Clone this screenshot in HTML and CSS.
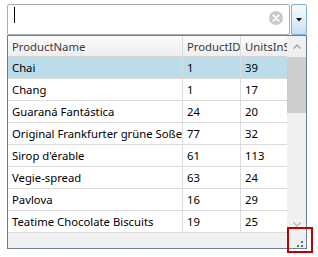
FILE: index.html
```html
<!DOCTYPE html>
<html lang="en">
<head>
    <meta charset="UTF-8">
    <title>Products</title>
    <link rel="stylesheet" href="styles.css">
</head>
<body>
    <div class="combo">
        <div class="field">
            <span class="caret"></span>
            <span class="clear">
                <svg width="14" height="14" viewBox="0 0 14 14">
                    <circle cx="7" cy="7" r="7" fill="#c9c9c9"/>
                    <path d="M4.3 4.3 L9.7 9.7 M9.7 4.3 L4.3 9.7" stroke="#fff" stroke-width="1.8" stroke-linecap="round"/>
                </svg>
            </span>
        </div>
        <div class="drop-btn">
            <svg width="6" height="4" viewBox="0 0 6 4"><path d="M0 0 H6 L3 3.5 Z" fill="#111"/></svg>
        </div>
    </div>

    <div class="popup">
        <div class="grid">
            <div class="table">
                <div class="row head">
                    <div class="cell c-name">ProductName</div>
                    <div class="cell c-id">ProductID</div>
                    <div class="cell c-units">UnitsInStock</div>
                </div>
                <div class="row sel">
                    <div class="cell c-name">Chai</div>
                    <div class="cell c-id">1</div>
                    <div class="cell c-units">39</div>
                </div>
                <div class="row">
                    <div class="cell c-name">Chang</div>
                    <div class="cell c-id">1</div>
                    <div class="cell c-units">17</div>
                </div>
                <div class="row">
                    <div class="cell c-name">Guaraná Fantástica</div>
                    <div class="cell c-id">24</div>
                    <div class="cell c-units">20</div>
                </div>
                <div class="row">
                    <div class="cell c-name">Original Frankfurter grüne Soße</div>
                    <div class="cell c-id">77</div>
                    <div class="cell c-units">32</div>
                </div>
                <div class="row">
                    <div class="cell c-name">Sirop d'érable</div>
                    <div class="cell c-id">61</div>
                    <div class="cell c-units">113</div>
                </div>
                <div class="row">
                    <div class="cell c-name">Vegie-spread</div>
                    <div class="cell c-id">63</div>
                    <div class="cell c-units">24</div>
                </div>
                <div class="row">
                    <div class="cell c-name">Pavlova</div>
                    <div class="cell c-id">16</div>
                    <div class="cell c-units">29</div>
                </div>
                <div class="row">
                    <div class="cell c-name">Teatime Chocolate Biscuits</div>
                    <div class="cell c-id">19</div>
                    <div class="cell c-units">25</div>
                </div>
            </div>
            <div class="vscroll">
                <div class="arrow">
                    <svg width="8" height="5" viewBox="0 0 8 5"><path d="M0.5 4.5 L4 1 L7.5 4.5" fill="none" stroke="#9a9a9a" stroke-width="1.2"/></svg>
                </div>
                <div class="thumb"></div>
                <div class="track"></div>
                <div class="arrow down">
                    <svg width="8" height="5" viewBox="0 0 8 5"><path d="M0.5 0.5 L4 4 L7.5 0.5" fill="none" stroke="#b4b4b4" stroke-width="1.2"/></svg>
                </div>
            </div>
        </div>
        <div class="hscroll">
            <span class="grip">
                <svg width="6" height="6" viewBox="0 0 6 6">
                    <rect x="4" y="0" width="2" height="2" fill="#5f6d7a"/>
                    <rect x="0" y="4" width="2" height="2" fill="#5f6d7a"/>
                    <rect x="4" y="4" width="2" height="2" fill="#5f6d7a"/>
                </svg>
            </span>
        </div>
    </div>

    <div class="mark"></div>
</body>
</html>
```

FILE: styles.css
```css
body {
    margin: 0;
    padding: 4px 0 0 7px;
    background: #fff;
    font-family: "Noto Sans", "Open Sans", sans-serif;
    font-size: 11.3px;
    color: #000;
}

/* combo box */
.combo {
    display: flex;
    width: 300px;
    height: 31px;
}

.field {
    flex: 1;
    display: flex;
    align-items: flex-start;
    border: 1px solid #abadb3;
    border-radius: 2px;
    padding: 2px 6px 0 6px;
}

.caret {
    width: 1px;
    height: 16px;
    background: #000;
}

.clear {
    margin-left: auto;
    margin-top: 4px;
    display: flex;
}

.drop-btn {
    width: 16px;
    margin-left: 1px;
    box-sizing: border-box;
    border: 1px solid #86b1d6;
    border-radius: 2px;
    background: linear-gradient(#f6fbfe, #e3f1fb 50%, #c3e0f4);
    display: flex;
    justify-content: center;
    align-items: center;
}

/* drop-down grid */
.popup {
    width: 300px;
    box-sizing: border-box;
    border: 1px solid #6f7e8c;
}

.grid {
    display: flex;
}

.table {
    width: 279px;
}

.row {
    display: flex;
    height: 22px;
    box-sizing: border-box;
    border-bottom: 1px solid #dcdcdc;
}

.row.sel {
    background: #bbdce9;
}

.row.head {
    height: 21px;
    background: linear-gradient(#fbfbfb, #eeeeee);
    border-bottom-color: #d5d5d5;
    color: #3a3a3a;
}

.cell {
    box-sizing: border-box;
    padding-left: 4px;
    display: flex;
    align-items: center;
    white-space: nowrap;
    overflow: hidden;
}

.c-name {
    width: 175px;
    border-right: 1px solid #dcdcdc;
}

.c-id {
    width: 58px;
    border-right: 1px solid #dcdcdc;
}

.c-units {
    width: 46px;
}

.vscroll {
    width: 19px;
    display: flex;
    flex-direction: column;
    background: #f0f0f0;
}

.arrow {
    height: 21px;
    display: flex;
    justify-content: center;
    align-items: center;
}

.arrow.down {
    height: 17px;
}

.thumb {
    height: 56px;
    background: #cdcdcd;
}

.track {
    flex: 1;
}

.hscroll {
    height: 14px;
    background: #f0f0f0;
    display: flex;
    justify-content: flex-end;
    align-items: flex-end;
    padding: 0 3px 1px 0;
}

.grip {
    display: flex;
}

/* annotation box */
.mark {
    position: absolute;
    left: 287px;
    top: 227px;
    width: 26px;
    height: 26px;
    box-sizing: border-box;
    border: 2px solid #c00000;
}
```
